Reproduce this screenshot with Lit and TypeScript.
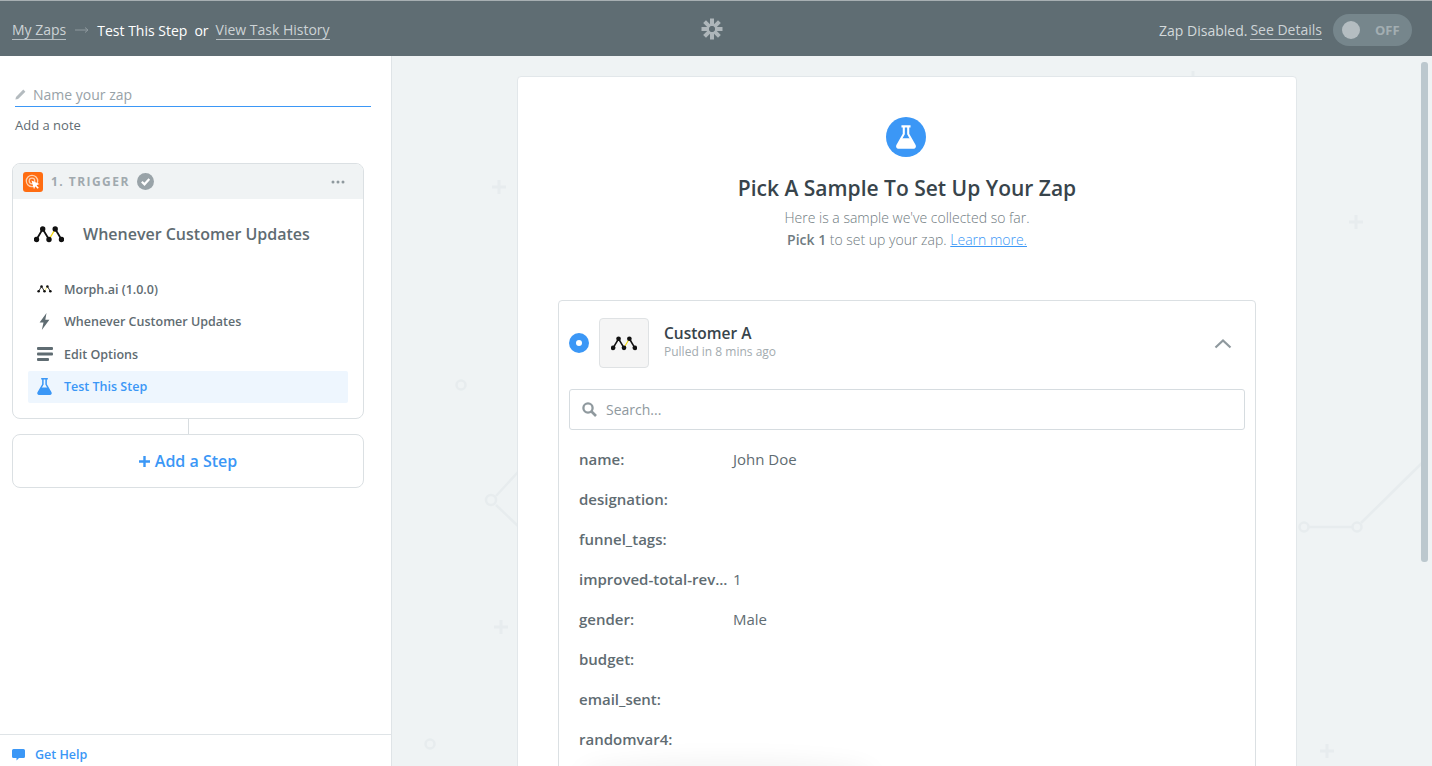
import { LitElement, css, html, svg } from "lit";
import { customElement } from "lit/decorators.js";

const flask = (fill: string) => svg`<path fill=${fill} d="M6.5 1h7v1.6h-1v4.9l4.9 8.6c.7 1.3-.1 2.9-1.6 2.9H4.200c-1.500 0-2.300-1.600-1.600-2.900L7.500 7.500V2.600h-1V1zm2.600 1.600v5.300L7 11.600h6l-2.100-3.700V2.600H9.100z"/><path fill=${fill} d="M7 11h6l1 2H6z"/>`;

const morph = (bg = "#111") => svg`
  <path d="M2.500 13.500 8.700 3 15 13.500" fill="none" stroke=${bg} stroke-width="1.800"/>
  <path d="M15 13.500 21.200 3" fill="none" stroke="#f5d90a" stroke-width="1.300"/>
  <path d="M21.200 3 27.500 13.500" fill="none" stroke=${bg} stroke-width="1.800"/>
  <circle cx="2.500" cy="13.500" r="2.700" fill=${bg}/><circle cx="8.700" cy="3" r="2.700" fill=${bg}/>
  <circle cx="15" cy="13.500" r="2.700" fill=${bg}/><circle cx="21.200" cy="3" r="2.700" fill=${bg}/>
  <circle cx="27.500" cy="13.500" r="2.700" fill=${bg}/>`;

const rows: [string, string][] = [
  ["name:", "John Doe"],
  ["designation:", ""],
  ["funnel_tags:", ""],
  ["improved-total-rev...", "1"],
  ["gender:", "Male"],
  ["budget:", ""],
  ["email_sent:", ""],
  ["randomvar4:", ""],
];

@customElement("app-root")
export class AppRoot extends LitElement {
  static styles = css`
    :host {
      display: block;
      height: 766px;
      overflow: hidden;
      font-family: "Open Sans", sans-serif;
      color: #5f6c72;
    }

    svg {
      display: block;
      flex: none;
    }

    .topbar {
      box-sizing: border-box;
      height: 56px;
      border-top: 1px solid #a7afb2;
      background: #5f6d73;
      display: grid;
      grid-template-columns: 1fr auto 1fr;
      align-items: center;
      padding: 3px 20px 0 12px;
      font-size: 14px;
    }

    .crumbs,
    .status {
      display: flex;
      align-items: center;
    }

    .status {
      justify-content: flex-end;
      color: #d3d9db;
    }

    .crumbs a,
    .status a {
      color: #cdd3d6;
      border-bottom: 1px solid #b5bdc1;
      line-height: 19px;
    }

    .crumbs .arrow {
      margin: 0 8px 0 9px;
    }

    .crumbs b {
      color: #fff;
      font-weight: 400;
    }

    .crumbs .or {
      color: #fff;
      margin: 0 7px 0 7px;
    }

    .status a {
      margin-left: 3px;
    }

    .logo {
      margin-top: -2px;
    }

    .toggle {
      width: 79px;
      height: 32px;
      margin-left: 11px;
      border-radius: 16px;
      background: #76868c;
      display: flex;
      align-items: center;
      padding-left: 9px;
      box-sizing: border-box;
    }

    .knob {
      width: 18px;
      height: 18px;
      border-radius: 50%;
      background: #b4bdc1;
    }

    .toggle span {
      margin-left: 15px;
      font-size: 13px;
      font-weight: 700;
      color: #a3aeb2;
    }

    .body {
      display: flex;
      height: 710px;
    }

    .side {
      box-sizing: border-box;
      width: 392px;
      flex: none;
      border-right: 1px solid #dfe4e7;
      background: #fff;
      display: flex;
      flex-direction: column;
    }

    .name {
      margin: 27px 20px 0 15px;
      height: 23px;
      border-bottom: 1px solid #3b97f6;
      display: flex;
      align-items: center;
      gap: 7px;
      font-size: 14px;
      color: #98a2a7;
    }

    .note {
      margin: 10px 0 0 15px;
      font-size: 13px;
      font-weight: 500;
      line-height: 17px;
    }

    .step {
      margin: 29px 27px 0 12px;
      border: 1px solid #dbe0e3;
      border-radius: 8px;
      overflow: hidden;
    }

    .step-head {
      height: 35px;
      background: #f0f3f4;
      display: flex;
      align-items: center;
      padding: 0 18px 0 10px;
    }

    .app-badge {
      width: 20px;
      height: 20px;
      border-radius: 3px;
      background: #ff6d12;
      display: flex;
      align-items: center;
      justify-content: center;
    }

    .step-label {
      margin-left: 8px;
      font-size: 12px;
      font-weight: 700;
      letter-spacing: 1.450px;
      color: #a0a9ae;
    }

    .check {
      margin-left: 7px;
    }

    .dots {
      margin-left: auto;
    }

    .step-title {
      height: 70px;
      display: flex;
      align-items: center;
      padding-left: 21px;
      gap: 19px;
      font-size: 16px;
      font-weight: 600;
    }

    .step-list {
      padding: 4px 15px 15px;
    }

    .step-item {
      height: 32.500px;
      display: flex;
      align-items: center;
      font-size: 12.500px;
      font-weight: 600;
      border-radius: 2px;
    }

    .step-item .ic {
      width: 36px;
      display: flex;
      justify-content: center;
      flex: none;
      padding-right: 3px;
      box-sizing: border-box;
    }

    .step-item.active {
      background: #eef6fe;
      color: #3b97f6;
    }

    .connector {
      width: 1px;
      height: 15px;
      background: #d8dde0;
      margin-left: 188px;
    }

    .add {
      margin: 0 27px 0 12px;
      height: 52px;
      border: 1px solid #dbe0e3;
      border-radius: 8px;
      display: flex;
      align-items: center;
      justify-content: center;
      color: #3b97f6;
      font-size: 16px;
      font-weight: 600;
      gap: 5px;
    }

    .help {
      margin-top: auto;
      box-sizing: border-box;
      height: 32px;
      border-top: 1px solid #dfe4e7;
      display: flex;
      align-items: center;
      padding: 8px 0 0 12px;
      gap: 10px;
      color: #3b97f6;
      font-size: 12.500px;
      font-weight: 600;
    }

    .main {
      position: relative;
      flex: 1;
      background: #eff3f4;
      overflow: hidden;
    }

    .decor {
      position: absolute;
      inset: 0;
    }

    .thumb {
      position: absolute;
      left: 1029px;
      top: 6px;
      width: 7px;
      height: 500px;
      border-radius: 3px;
      background: #bcc8ce;
    }

    .fade {
      position: absolute;
      left: 200px;
      bottom: -16px;
      width: 270px;
      height: 10px;
      border-radius: 50%;
      box-shadow: 0 0 24px 12px rgba(0, 0, 0, 0.05);
    }

    .card {
      position: relative;
      box-sizing: border-box;
      width: 780px;
      margin: 20px 0 0 125px;
      padding: 40px 40px 0;
      background: #fff;
      border: 1px solid #e2e7ea;
      border-radius: 4px;
      text-align: center;
    }

    .hero {
      width: 40px;
      height: 40px;
      border-radius: 50%;
      background: #3b97f6;
      margin-left: 328px;
      display: flex;
      align-items: center;
      justify-content: center;
    }

    h1 {
      margin: 17px 0 0;
      font-size: 21px;
      font-weight: 600;
      line-height: 28px;
      color: #38444b;
    }

    .lead {
      margin: 5px 0 0;
      font-size: 14px;
      font-weight: 300;
      line-height: 22px;
      color: #6f7b81;
    }

    .lead b {
      font-weight: 600;
    }

    .lead a {
      color: #3b97f6;
      text-decoration: underline;
    }

    .sample {
      margin: 49px 0 0;
      border: 1px solid #dbe0e3;
      border-radius: 4px 4px 0 0;
      padding: 17px 10px 0;
      text-align: left;
    }

    .sample-head {
      display: flex;
      align-items: center;
    }

    .radio {
      box-sizing: border-box;
      width: 20px;
      height: 20px;
      border-radius: 50%;
      background: #3b97f6;
      display: flex;
      align-items: center;
      justify-content: center;
    }

    .radio i {
      width: 6px;
      height: 6px;
      border-radius: 50%;
      background: #fff;
    }

    .tile {
      box-sizing: border-box;
      width: 50px;
      height: 50px;
      margin-left: 10px;
      background: #f5f5f5;
      border: 1px solid #dfe2e4;
      border-radius: 4px;
      display: flex;
      align-items: center;
      justify-content: center;
    }

    .who {
      margin: -4px 0 0 15px;
    }

    .who b {
      display: block;
      font-size: 15.500px;
      font-weight: 600;
      line-height: 20px;
      color: #38444b;
    }

    .who span {
      display: block;
      margin-top: 1px;
      font-size: 12px;
      line-height: 16px;
      color: #a3abaf;
    }

    .chev {
      margin-left: auto;
      margin-right: 13px;
    }

    .search {
      box-sizing: border-box;
      height: 41px;
      margin-top: 21px;
      border: 1px solid #d6dce0;
      border-radius: 3px;
      display: flex;
      align-items: center;
      padding-left: 12px;
      gap: 9px;
      font-size: 14px;
      color: #8f999e;
    }

    .rows {
      padding: 9px 0 60px 10px;
    }

    .row {
      display: flex;
      height: 40px;
      align-items: center;
      font-size: 15px;
    }

    .row b {
      width: 154px;
      flex: none;
      font-weight: 600;
      white-space: nowrap;
    }
  `;

  render() {
    return html`
      <header class="topbar">
        <div class="crumbs">
          <a>My Zaps</a>
          <svg class="arrow" width="14" height="8" viewBox="0 0 14 8"><path d="M0 4h12.500M10 1.500 13 4l-3 2.500" fill="none" stroke="#8f9a9f" stroke-width="1"/></svg>
          <b>Test This Step</b><span class="or">or</span>
          <a>View Task History</a>
        </div>
        <svg class="logo" width="22" height="22" viewBox="0 0 22 22">
          <g fill="#aeb6ba">
            ${[0, 45, 90, 135, 180, 225, 270, 315].map(
              (a) => svg`<rect x="9" y="0.500" width="4" height="7.500" transform="rotate(${a} 11 11)"/>`
            )}
          </g>
        </svg>
        <div class="status">
          Zap Disabled.
          <a>See Details</a>
          <div class="toggle"><div class="knob"></div><span>OFF</span></div>
        </div>
      </header>

      <div class="body">
        <aside class="side">
          <div class="name">
            <svg width="11" height="11" viewBox="0 0 11 11"><path d="M8.300.6l2.100 2.100-7.300 7.300L.4 10.600 1 7.900z" fill="#b4bbbf"/></svg>
            Name your zap
          </div>
          <div class="note">Add a note</div>

          <section class="step">
            <div class="step-head">
              <div class="app-badge">
                <svg width="16" height="16" viewBox="0 0 16 16">
                  <circle cx="7" cy="7" r="5.700" fill="none" stroke="#ffd0ad" stroke-width="1.300"/>
                  <circle cx="7" cy="7" r="2.800" fill="none" stroke="#ffd0ad" stroke-width="1.300"/>
                  <path d="M6.500 6.500 14.500 10l-3 1.200 2.300 2.500-1.200 1.100-2.300-2.500-1.300 2.900z" fill="#fff"/>
                </svg>
              </div>
              <span class="step-label">1. TRIGGER</span>
              <svg class="check" width="17" height="17" viewBox="0 0 17 17">
                <circle cx="8.500" cy="8.500" r="8.500" fill="#99a3a8"/>
                <path d="M4.800 8.700 7.500 11.300 12.300 6" fill="none" stroke="#fff" stroke-width="2.200"/>
              </svg>
              <svg class="dots" width="14" height="4" viewBox="0 0 14 4" fill="#8f999e">
                <circle cx="2" cy="2" r="1.500"/><circle cx="7" cy="2" r="1.500"/><circle cx="12" cy="2" r="1.500"/>
              </svg>
            </div>
            <div class="step-title">
              <svg width="30" height="17" viewBox="0 0 30 17">${morph()}</svg>
              Whenever Customer Updates
            </div>
            <div class="step-list">
              <div class="step-item">
                <span class="ic"><svg width="15" height="8" viewBox="0 0 30 17">${morph()}</svg></span>Morph.ai (1.0.0)
              </div>
              <div class="step-item">
                <span class="ic"><svg width="11" height="17" viewBox="0 0 11 17"><path d="M7.500 0 .6 9.500h3.900L2.800 17l7.600-10.300H6.300z" fill="#5f6c72"/></svg></span>Whenever Customer Updates
              </div>
              <div class="step-item">
                <span class="ic">
                  <svg width="16" height="14" viewBox="0 0 16 14" fill="#5f6c72">
                    <rect width="16" height="3" y="0" rx="1"/><rect width="16" height="3" y="5.500" rx="1"/><rect width="12" height="3" y="11" rx="1"/>
                  </svg>
                </span>Edit Options
              </div>
              <div class="step-item active">
                <span class="ic"><svg width="19" height="19" viewBox="0 0 20 20">${flask("#3b97f6")}</svg></span>Test This Step
              </div>
            </div>
          </section>

          <div class="connector"></div>
          <div class="add">
            <svg width="11" height="11" viewBox="0 0 11 11"><path d="M5.500 0v11M0 5.500h11" stroke="#3b97f6" stroke-width="2.400"/></svg>
            Add a Step
          </div>

          <div class="help">
            <svg width="13" height="12" viewBox="0 0 13 12"><path d="M1.500 0h10A1.500 1.500 0 0 1 13 1.500v6A1.500 1.500 0 0 1 11.500 9H7l-2.500 2.500V9h-3A1.500 1.500 0 0 1 0 7.500v-6A1.500 1.500 0 0 1 1.500 0z" fill="#3b97f6"/></svg>
            Get Help
          </div>
        </aside>

        <main class="main">
          <svg class="decor" width="1040" height="710" viewBox="0 0 1040 710" fill="none" stroke="#e7ecee" stroke-width="2.500">
            <circle cx="69" cy="329" r="4.500"/>
            <path d="M104 440 126 416M104 449 126 470"/>
            <circle cx="99" cy="444" r="5"/>
            <path d="M102 571h14M109 564v14" stroke-width="3"/>
            <path d="M100 131h14M107 124v14" stroke-width="3"/>
            <path d="M801 15v8" stroke-width="3"/>
            <circle cx="38" cy="688" r="4.500"/>
            <path d="M957 166h14M964 159v14" stroke-width="3"/>
            <path d="M928 695h14M935 688v14" stroke-width="3"/>
            <circle cx="912" cy="471" r="4.500"/>
            <circle cx="965" cy="471" r="4.500"/>
            <path d="M917 471h43M969 467 1032 405"/>
            <path d="M905 471h-2"/>
          </svg>
          <div class="thumb"></div>

          <section class="card">
            <div class="hero"><svg width="26" height="26" viewBox="0 0 20 20">${flask("#fff")}</svg></div>
            <h1>Pick A Sample To Set Up Your Zap</h1>
            <p class="lead">
              Here is a sample we've collected so far.<br />
              <b>Pick 1</b> to set up your zap. <a>Learn more.</a>
            </p>

            <div class="sample">
              <div class="sample-head">
                <div class="radio"><i></i></div>
                <div class="tile"><svg width="26" height="15" viewBox="0 0 30 17">${morph()}</svg></div>
                <div class="who">
                  <b>Customer A</b>
                  <span>Pulled in 8 mins ago</span>
                </div>
                <svg class="chev" width="18" height="11" viewBox="0 0 18 11"><path d="M1.500 9.500 9 2.500l7.500 7" fill="none" stroke="#8f999e" stroke-width="2.200"/></svg>
              </div>
              <div class="search">
                <svg width="15" height="15" viewBox="0 0 15 15"><circle cx="6" cy="6" r="4.600" fill="none" stroke="#8f999e" stroke-width="2.300"/><path d="M9.500 9.500 14 14" stroke="#8f999e" stroke-width="2.600"/></svg>
                Search...
              </div>
              <div class="rows">
                ${rows.map(([k, v]) => html`<div class="row"><b>${k}</b><span>${v}</span></div>`)}
              </div>
            </div>
          </section>
          <div class="fade"></div>
        </main>
      </div>
    `;
  }
}
